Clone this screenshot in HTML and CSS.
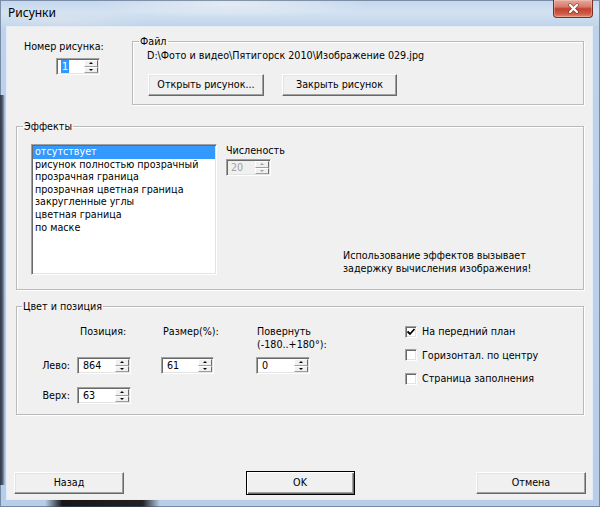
FILE: index.html
```html
<!DOCTYPE html>
<html lang="ru">
<head>
<meta charset="utf-8">
<title>Рисунки</title>
<link rel="stylesheet" href="styles.css">
</head>
<body>
<div class="win">
  <div class="titlebar">
    <span class="title">Рисунки</span>
    <div class="close">
      <svg width="13" height="11" viewBox="0 0 13 11"><path d="M3 2 L10 9 M10 2 L3 9" stroke="#5a1e16" stroke-width="3.8" stroke-linecap="round" opacity=".5"/><path d="M3 2 L10 9 M10 2 L3 9" stroke="#fff" stroke-width="2.2" stroke-linecap="round"/></svg>
    </div>
  </div>
  <div class="client">
    <div class="top">
      <div class="num">
        <div class="lbl">Номер рисунка:</div>
        <div class="spin w-num"><span class="val"><span class="sel">1</span></span><span class="arr"><i class="up"></i><i class="dn"></i></span></div>
      </div>
      <fieldset class="grp grp-file">
        <legend>Файл</legend>
        <div class="path">D:\Фото и видео\Пятигорск 2010\Изображение 029.jpg</div>
        <div class="fbtns">
          <button class="btn b-open">Открыть рисунок...</button>
          <button class="btn b-close">Закрыть рисунок</button>
        </div>
      </fieldset>
    </div>

    <fieldset class="grp grp-fx">
      <legend>Эффекты</legend>
      <div class="fx">
        <div class="list">
          <div class="item on">отсутствует</div>
          <div class="item">рисунок полностью прозрачный</div>
          <div class="item">прозрачная граница</div>
          <div class="item">прозрачная цветная граница</div>
          <div class="item">закругленные углы</div>
          <div class="item">цветная граница</div>
          <div class="item">по маске</div>
        </div>
        <div class="fx-side">
          <div class="lbl">Численость</div>
          <div class="spin w-cnt dis"><span class="val">20</span><span class="arr"><i class="up"></i><i class="dn"></i></span></div>
        </div>
        <div class="warn">Использование эффектов вызывает<br>задержку вычисления изображения!</div>
      </div>
    </fieldset>

    <fieldset class="grp grp-pos">
      <legend>Цвет и позиция</legend>
      <div class="pos">
        <div class="h h-pos">Позиция:</div>
        <div class="h h-size">Размер(%):</div>
        <div class="h h-rot">Повернуть<br>(-180..+180°):</div>

        <div class="rl r-left">Лево:</div>
        <div class="spin w54 c-x r-1"><span class="val">864</span><span class="arr"><i class="up"></i><i class="dn"></i></span></div>
        <div class="spin w53 c-s r-1"><span class="val">61</span><span class="arr"><i class="up"></i><i class="dn"></i></span></div>
        <div class="spin w54 c-r r-1"><span class="val">0</span><span class="arr"><i class="up"></i><i class="dn"></i></span></div>

        <div class="rl r-top">Верх:</div>
        <div class="spin w54 c-x r-2"><span class="val">63</span><span class="arr"><i class="up"></i><i class="dn"></i></span></div>

        <div class="checks">
          <div class="cb"><span class="box"><svg width="10" height="10" viewBox="0 0 10 10"><path d="M1.5 4.5 L4 7 L8.5 2" fill="none" stroke="#000" stroke-width="1.8"/></svg></span><span>На передний план</span></div>
          <div class="cb"><span class="box"></span><span>Горизонтал. по центру</span></div>
          <div class="cb"><span class="box"></span><span>Страница заполнения</span></div>
        </div>
      </div>
    </fieldset>

    <div class="footer">
      <button class="btn b-foot">Назад</button>
      <button class="btn b-foot def">OK</button>
      <button class="btn b-foot">Отмена</button>
    </div>
  </div>
</div>
</body>
</html>
```

FILE: styles.css
```css
* { box-sizing: border-box; }
html, body { margin: 0; padding: 0; }
body {
  width: 600px;
  height: 507px;
  overflow: hidden;
  font-family: "DejaVu Sans", sans-serif;
  font-size: 9.6px;
  color: #000;
  background: #b9cfe8;
}

.win {
  width: 600px;
  height: 507px;
  display: flex;
  flex-direction: column;
  background:
    linear-gradient(90deg, rgba(15,15,20,.9), rgba(15,15,20,.5) 60%, rgba(15,15,20,0)) 0 95px / 5px 390px no-repeat,
    linear-gradient(90deg, rgba(0,0,0,0), #161616 15%, #222 85%, rgba(0,0,0,0)) 45px 500px / 115px 7px no-repeat,
    radial-gradient(ellipse 140px 14px at 230px 4px, rgba(235,240,245,.8), rgba(235,240,245,0)) ,
    radial-gradient(ellipse 90px 12px at 60px 20px, rgba(220,228,236,.7), rgba(220,228,236,0)),
    linear-gradient(180deg, #c3d6ec 0, #d3e2f2 12px, #bed3ea 27px, #b8cee8 100%);
  box-shadow: inset 0 0 0 1px rgba(60,80,110,.55);
}

.titlebar {
  height: 27px;
  flex: none;
  display: flex;
  justify-content: space-between;
  align-items: flex-start;
}
.title {
  font-family: "Noto Sans", sans-serif;
  font-size: 12px;
  line-height: 16px;
  margin: 5px 0 0 8px;
  color: #000;
}
.close {
  width: 40px;
  height: 18px;
  margin-right: 7px;
  border: 1px solid #7a3028;
  border-top: none;
  border-radius: 0 0 4px 4px;
  background: linear-gradient(180deg, #e6a99c 0, #d87a6a 40%, #c2402f 52%, #cf5a45 80%, #e08a70 100%);
  box-shadow: inset 0 0 0 1px rgba(255,220,210,.35);
  display: flex;
  align-items: center;
  justify-content: center;
}

.client {
  margin-left: 7px;
  width: 585px;
  height: 472px;
  flex: none;
  background: #f0f0f0;
  display: flex;
  flex-direction: column;
  box-shadow: 0 0 0 1px #e4edf7;
}

/* group boxes */
.grp {
  margin: 0;
  min-width: 0;
  border: 1px solid #bababa;
  box-shadow: inset 1px 1px 0 #fff, 1px 1px 0 #fff;
}
.grp legend {
  padding: 0 1px;
  margin-left: -8px;
  line-height: 13px;
}
.grp-pos legend { margin-left: 5px; }

.lbl { line-height: 13px; white-space: nowrap; }

/* top row */
.top {
  display: flex;
  align-items: flex-start;
  padding-top: 8px;
}
.num {
  width: 108px;
  margin-left: 17px;
  padding-top: 5px;
  flex: none;
}
.num .spin { margin: 5px 0 0 32px; }
.grp-file {
  width: 452px;
  padding: 1px 14px 8px;
}
.path { line-height: 13px; white-space: nowrap; }
.fbtns {
  display: flex;
  gap: 18px;
  margin-top: 12px;
  padding-left: 1px;
}
.b-open { width: 116px; }
.b-close { width: 115px; }

/* spin edits */
.spin {
  display: flex;
  height: 17px;
  background: #fff;
  border: 1px solid;
  border-color: #a0a0a0 #ffffff #ffffff #a0a0a0;
  box-shadow: inset 1px 1px 0 #696969, inset -1px -1px 0 #e3e3e3;
  padding: 1px;
}
.spin .val {
  flex: 1;
  padding-left: 3px;
  line-height: 13px;
  white-space: nowrap;
}
.spin .sel {
  background: #3399ff;
  color: #fff;
  padding: 0 1px;
  display: inline-block;
  line-height: 13px;
}
.arr {
  width: 14px;
  display: flex;
  flex-direction: column;
}
.arr i {
  flex: 1;
  display: flex;
  align-items: center;
  justify-content: center;
  background: #f0f0f0;
  border: 1px solid;
  border-color: #fff #696969 #a0a0a0 #fff;
}
.arr i::before {
  content: "";
  border-left: 2px solid transparent;
  border-right: 2px solid transparent;
}
.arr .up::before { border-bottom: 2px solid #000; }
.arr .dn::before { border-top: 2px solid #000; }
.spin.dis { background: #f0f0f0; color: #a0a0a0; }
.spin.dis .arr .up::before { border-bottom-color: #a0a0a0; }
.spin.dis .arr .dn::before { border-top-color: #a0a0a0; }

.w-num { width: 44px; }
.w-cnt { width: 45px; }
.w54 { width: 54px; }
.w53 { width: 53px; }
.w54 .val, .w53 .val { padding-left: 4px; }

/* effects */
.grp-fx {
  margin: 15px 0 0 9px;
  width: 568px;
  padding: 11px 14px 14px;
}
.fx { display: flex; }
.list {
  width: 186px;
  height: 131px;
  flex: none;
  background: #fff;
  border: 1px solid;
  border-color: #a0a0a0 #ffffff #ffffff #a0a0a0;
  box-shadow: inset 1px 1px 0 #696969, inset -1px -1px 0 #e3e3e3;
  padding: 1px;
}
.item {
  line-height: 12.6px;
  padding-left: 2px;
  white-space: nowrap;
}
.item.on { background: #3399ff; color: #fff; }
.fx-side {
  width: 80px;
  margin-left: 9px;
  flex: none;
  color: #000;
}
.fx-side .spin { margin-top: 2px; }
.warn {
  align-self: flex-end;
  margin-left: 37px;
  line-height: 12.5px;
  white-space: nowrap;
}

/* position */
.grp-pos {
  margin: 10px 0 0 9px;
  width: 568px;
  padding: 12px 0 10px;
}
.pos {
  display: grid;
  grid-template-columns: 60px 84px 95px 149px 1fr;
  grid-template-rows: 32px 17px 13px 17px;
}
.h { line-height: 13px; white-space: nowrap; grid-row: 1; }
.h-pos { grid-column: 2; padding-left: 3px; }
.h-size { grid-column: 3; padding-left: 2px; }
.h-rot { grid-column: 4; padding-left: 1px; }
.rl {
  grid-column: 1;
  text-align: right;
  padding-right: 7px;
  line-height: 17px;
}
.r-left { grid-row: 2; }
.r-top { grid-row: 4; }
.c-x { grid-column: 2; }
.c-s { grid-column: 3; }
.c-r { grid-column: 4; }
.r-1 { grid-row: 2; }
.r-2 { grid-row: 4; }

.checks {
  grid-column: 5;
  grid-row: 1 / span 4;
  display: flex;
  flex-direction: column;
  gap: 10.5px;
}
.cb {
  display: flex;
  align-items: center;
  gap: 5px;
  line-height: 13px;
  white-space: nowrap;
}
.box {
  width: 12px;
  height: 12px;
  flex: none;
  background: #fff;
  border: 1px solid;
  border-color: #a0a0a0 #ffffff #ffffff #a0a0a0;
  box-shadow: inset 1px 1px 0 #696969, inset -1px -1px 0 #e3e3e3;
  display: flex;
  align-items: center;
  justify-content: center;
}

/* buttons */
.btn {
  font: inherit;
  color: #000;
  height: 22px;
  padding: 0;
  margin: 0;
  background: #f0f0f0;
  border: 1px solid;
  border-color: #ffffff #696969 #696969 #ffffff;
  box-shadow: inset -1px -1px 0 #a0a0a0, inset 1px 1px 0 #e3e3e3;
  text-align: center;
  line-height: 18px;
  white-space: nowrap;
}
.footer {
  margin-top: auto;
  height: 28px;
  display: flex;
  justify-content: space-between;
  align-items: center;
  padding: 0 6px 4px 7px;
}
.b-foot { width: 110px; }
.btn.def {
  width: 109px;
  height: 24px;
  border: 1px solid #000;
  box-shadow: inset 1px 1px 0 #fff, inset -1px -1px 0 #696969, inset -2px -2px 0 #a0a0a0;
}
```
